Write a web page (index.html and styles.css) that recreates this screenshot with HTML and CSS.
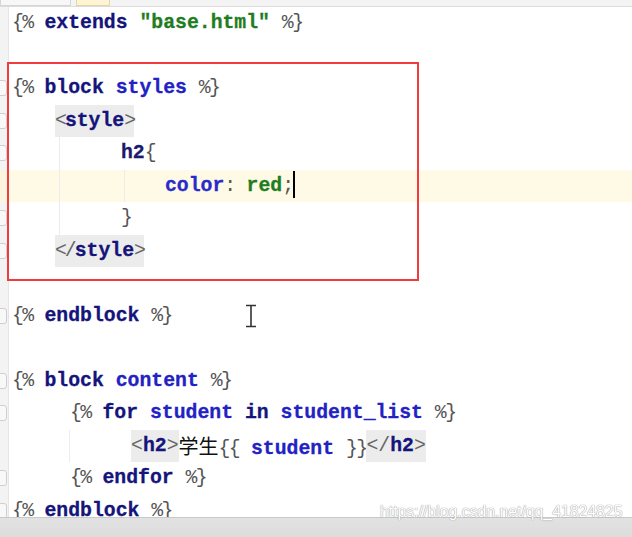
FILE: index.html
```html
<!DOCTYPE html>
<html lang="en">
<head>
    <meta charset="UTF-8">
    <title>base.html - editor</title>
    <link rel="stylesheet" href="styles.css">
</head>
<body>
    <div class="window">
        <!-- Tab strip (mostly cut off at the top) -->
        <div class="tabbar">
            <div class="tab"></div>
            <div class="tab active"></div>
        </div>

        <div class="editor">
            <div class="line"><span class="gutter"></span><span class="code"><span class="d">{%</span> <span class="kw">extends</span> <span class="str">"base.html"</span> <span class="d">%}</span></span></div>
            <div class="line"><span class="gutter"></span><span class="code"></span></div>
            <div class="line"><span class="gutter"><span class="fold"></span></span><span class="code"><span class="d">{%</span> <span class="kw">block</span> <span class="name">styles</span> <span class="d">%}</span></span></div>
            <div class="line"><span class="gutter"><span class="fold"></span></span><span class="code ind-1"><span class="tag"><span class="br">&lt;</span>style<span class="br">&gt;</span></span></span></div>
            <div class="line"><span class="gutter"><span class="fold"></span></span><span class="code ind-2"><span class="guide g1"></span><span class="sel">h2</span><span class="d">{</span></span></div>
            <div class="line current"><span class="gutter"></span><span class="code ind-3"><span class="guide g1"></span><span class="guide g2"></span><span class="prop">color</span><span class="d">:</span> <span class="str">red</span><span class="d">;</span><span class="caret"></span></span></div>
            <div class="line"><span class="gutter"><span class="fold"></span></span><span class="code ind-2"><span class="guide g1"></span><span class="d">}</span></span></div>
            <div class="line"><span class="gutter"><span class="fold"></span></span><span class="code ind-1"><span class="tag"><span class="br">&lt;/</span>style<span class="br">&gt;</span></span></span></div>
            <div class="line"><span class="gutter"></span><span class="code"></span></div>
            <div class="line"><span class="gutter"><span class="fold"></span></span><span class="code"><span class="d">{%</span> <span class="kw">endblock</span> <span class="d">%}</span><svg class="ibeam" width="12" height="24" viewBox="0 0 12 24"><path d="M1 1.5h10M1 22.5h10M6 1.5v21" fill="none" stroke="#333" stroke-width="1.6"/></svg></span></div>
            <div class="line"><span class="gutter"></span><span class="code"></span></div>
            <div class="line"><span class="gutter"><span class="fold"></span></span><span class="code"><span class="d">{%</span> <span class="kw">block</span> <span class="name">content</span> <span class="d">%}</span></span></div>
            <div class="line"><span class="gutter"><span class="fold"></span></span><span class="code ind-4"><span class="d">{%</span> <span class="kw">for</span> <span class="name">student</span> <span class="kw">in</span> <span class="name">student_list</span> <span class="d">%}</span></span></div>
            <div class="line"><span class="gutter"></span><span class="code ind-5"><span class="guide g3"></span><span class="tag wide"><span class="br">&lt;</span>h2<span class="br">&gt;</span></span><span class="cjk">学生</span><span class="d">{{</span> <span class="name">student</span> <span class="d">}}</span><span class="tag wide"><span class="br">&lt;/</span>h2<span class="br">&gt;</span></span></span></div>
            <div class="line"><span class="gutter"><span class="fold"></span></span><span class="code ind-4"><span class="d">{%</span> <span class="kw">endfor</span> <span class="d">%}</span></span></div>
            <div class="line"><span class="gutter"><span class="fold"></span></span><span class="code"><span class="d">{%</span> <span class="kw">endblock</span> <span class="d">%}</span></span></div>
        </div>

        <div class="statusbar"></div>

        <!-- annotation box drawn over the code -->
        <div class="mark"></div>
        <div class="watermark">https://blog.csdn.net/qq_41824825</div>
    </div>
</body>
</html>
```

FILE: styles.css
```css
body {
    margin: 0;
    background-color: #fff;
}

.window {
    position: relative;
    width: 632px;
    height: 537px;
    display: flex;
    flex-direction: column;
    overflow: hidden;
    background-color: #fff;
}

/* Tabs */
.tabbar {
    height: 6px;
    flex: 0 0 auto;
    display: flex;
    gap: 5px;
    background-color: #f4f4f4;
    border-bottom: 1px solid #dcdcdc;
}

.tab {
    width: 69px;
    border: 1px solid #d6d6d6;
    border-top: none;
    background-color: #f7f7f7;
}

.tab.active {
    width: 32px;
    background-color: #fdf4d4;
    border-color: #e2d6a8;
}

/* Editor */
.editor {
    flex: 1 1 auto;
    overflow: hidden;
    font-family: "Liberation Mono", "Noto Sans CJK SC", monospace;
    font-size: 19.8px;
    font-weight: bold;
    color: #000;
    -webkit-text-stroke: 0.3px;
}

.line {
    display: flex;
    height: 32.5px;
    line-height: 32.5px;
    white-space: pre;
}

.line.current {
    background-color: #fffae6;
}

.gutter {
    position: relative;
    flex: 0 0 8px;
    background-color: #f3f3f3;
    border-right: 1px solid #e6e6e6;
}

.line.current .gutter {
    background-color: #fbf5df;
}

.fold {
    position: absolute;
    left: -4px;
    top: 8px;
    width: 9px;
    height: 14px;
    border: 1px solid #cfcfcf;
    border-radius: 0 3px 3px 0;
    background-color: #f8f8f8;
}

.code {
    position: relative;
    display: block;
    padding-left: 3px;
}

.ind-1 { padding-left: 46px; }
.ind-2 { padding-left: 112px; }
.ind-3 { padding-left: 156px; }
.ind-4 { padding-left: 61px; }
.ind-5 { padding-left: 122px; }

.guide {
    position: absolute;
    top: 0;
    bottom: 0;
    width: 1px;
    background-color: #ececec;
}

.g1 { left: 50px; }
.g2 { left: 115px; }
.g3 { left: 60px; }

/* Token colours */
.d {
    color: #555;
    font-weight: normal;
    letter-spacing: -1.6px;
    -webkit-text-stroke: 0;
}

.kw {
    color: #14147a;
}

.name {
    color: #2222c4;
}

.str {
    color: #1f7d1f;
}

.prop {
    color: #2a2acb;
}

.sel {
    color: #1a1a6e;
}

.tag {
    display: inline-block;
    height: 32.5px;
    vertical-align: top;
    background-color: #ececec;
    color: #14147a;
}

.br {
    color: #666;
    font-weight: normal;
    letter-spacing: -2px;
    -webkit-text-stroke: 0;
}

.tag.wide .br {
    letter-spacing: 0;
}

.cjk {
    font-family: "Noto Sans CJK SC", sans-serif;
    font-weight: normal;
    font-size: 20px;
    color: #111;
    -webkit-text-stroke: 0;
}

.caret {
    display: inline-block;
    width: 2px;
    height: 27px;
    margin-left: 1px;
    vertical-align: -7px;
    background-color: #000;
}

.ibeam {
    position: absolute;
    left: 236px;
    top: 4px;
}

/* Bottom bar */
.statusbar {
    flex: 0 0 19px;
    background: linear-gradient(#e2e2e2, #dcdcdc);
    border-top: 1px solid #c9c9c9;
}

.mark {
    position: absolute;
    left: 7px;
    top: 62px;
    width: 408px;
    height: 215px;
    border: 2px solid #f23b3b;
}

.watermark {
    position: absolute;
    left: 380px;
    top: 503px;
    font-family: "Liberation Sans", Arial, sans-serif;
    font-size: 15.8px;
    color: #fff;
    text-shadow: 0 0 1px #999, 0 0 1px #999;
}
```
